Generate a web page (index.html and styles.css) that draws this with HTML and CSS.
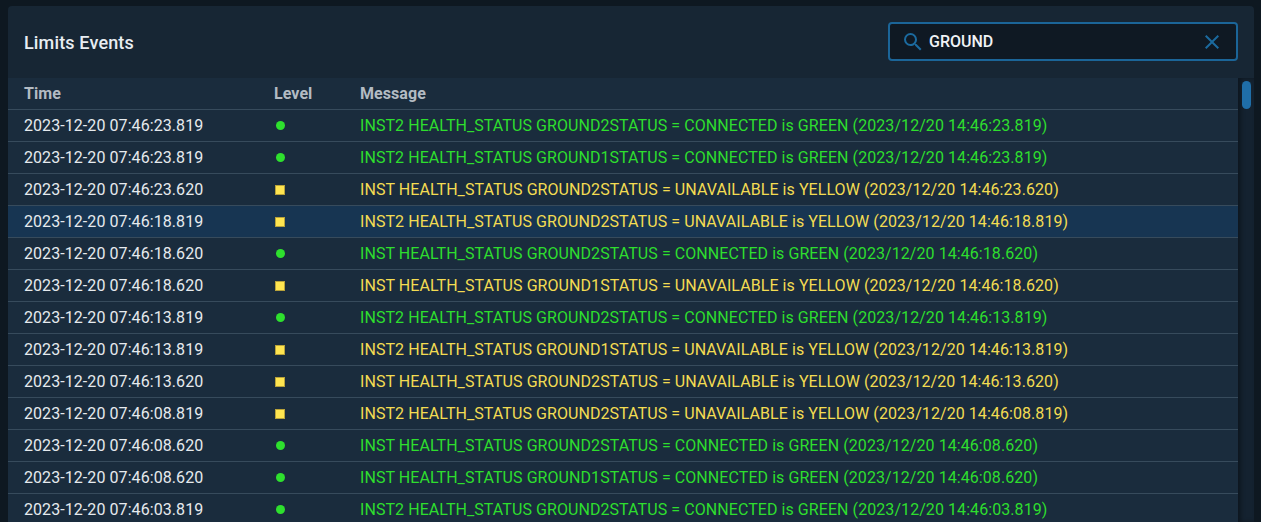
FILE: index.html
```html
<!DOCTYPE html>
<html>
<head>
<meta charset="utf-8">
<link rel="stylesheet" href="styles.css">
</head>
<body>
<div class="card">
  <div class="card-header">
    <div class="title">Limits Events</div>
    <div class="search">
      <svg class="search-icon" width="24" height="24" viewBox="0 0 24 24"><path fill="currentColor" d="M9.5,3A6.5,6.5 0 0,1 16,9.5C16,11.11 15.41,12.59 14.44,13.73L14.71,14H15.5L20.5,19L19,20.5L14,15.5V14.71L13.730,14.44C12.59,15.41 11.11,16 9.5,16A6.5,6.5 0 0,1 3,9.5A6.5,6.5 0 0,1 9.5,3M9.5,5C7,5 5,7 5,9.5C5,12 7,14 9.5,14C12,14 14,12 14,9.5C14,7 12,5 9.5,5Z"/></svg>
      <span class="search-text">GROUND</span>
      <svg class="clear-icon" width="24" height="24" viewBox="0 0 24 24"><path fill="currentColor" d="M19,6.41L17.59,5L12,10.59L6.41,5L5,6.41L10.59,12L5,17.59L6.41,19L12,13.41L17.59,19L19,17.59L13.41,12L19,6.41Z"/></svg>
    </div>
  </div>
  <div class="table-wrap">
    <div class="table">
      <div class="row head">
        <div class="c-time">Time</div>
        <div class="c-level">Level</div>
        <div class="c-msg">Message</div>
      </div>
      <div class="row"><div class="c-time">2023-12-20 07:46:23.819</div><div class="c-level"><span class="dot"></span></div><div class="c-msg green">INST2 HEALTH_STATUS GROUND2STATUS = CONNECTED is GREEN (2023/12/20 14:46:23.819)</div></div>
      <div class="row"><div class="c-time">2023-12-20 07:46:23.819</div><div class="c-level"><span class="dot"></span></div><div class="c-msg green">INST2 HEALTH_STATUS GROUND1STATUS = CONNECTED is GREEN (2023/12/20 14:46:23.819)</div></div>
      <div class="row"><div class="c-time">2023-12-20 07:46:23.620</div><div class="c-level"><span class="sq"></span></div><div class="c-msg yellow">INST HEALTH_STATUS GROUND2STATUS = UNAVAILABLE is YELLOW (2023/12/20 14:46:23.620)</div></div>
      <div class="row selected"><div class="c-time">2023-12-20 07:46:18.819</div><div class="c-level"><span class="sq"></span></div><div class="c-msg yellow">INST2 HEALTH_STATUS GROUND2STATUS = UNAVAILABLE is YELLOW (2023/12/20 14:46:18.819)</div></div>
      <div class="row"><div class="c-time">2023-12-20 07:46:18.620</div><div class="c-level"><span class="dot"></span></div><div class="c-msg green">INST HEALTH_STATUS GROUND2STATUS = CONNECTED is GREEN (2023/12/20 14:46:18.620)</div></div>
      <div class="row"><div class="c-time">2023-12-20 07:46:18.620</div><div class="c-level"><span class="sq"></span></div><div class="c-msg yellow">INST HEALTH_STATUS GROUND1STATUS = UNAVAILABLE is YELLOW (2023/12/20 14:46:18.620)</div></div>
      <div class="row"><div class="c-time">2023-12-20 07:46:13.819</div><div class="c-level"><span class="dot"></span></div><div class="c-msg green">INST2 HEALTH_STATUS GROUND2STATUS = CONNECTED is GREEN (2023/12/20 14:46:13.819)</div></div>
      <div class="row"><div class="c-time">2023-12-20 07:46:13.819</div><div class="c-level"><span class="sq"></span></div><div class="c-msg yellow">INST2 HEALTH_STATUS GROUND1STATUS = UNAVAILABLE is YELLOW (2023/12/20 14:46:13.819)</div></div>
      <div class="row"><div class="c-time">2023-12-20 07:46:13.620</div><div class="c-level"><span class="sq"></span></div><div class="c-msg yellow">INST HEALTH_STATUS GROUND2STATUS = UNAVAILABLE is YELLOW (2023/12/20 14:46:13.620)</div></div>
      <div class="row"><div class="c-time">2023-12-20 07:46:08.819</div><div class="c-level"><span class="sq"></span></div><div class="c-msg yellow">INST2 HEALTH_STATUS GROUND2STATUS = UNAVAILABLE is YELLOW (2023/12/20 14:46:08.819)</div></div>
      <div class="row"><div class="c-time">2023-12-20 07:46:08.620</div><div class="c-level"><span class="dot"></span></div><div class="c-msg green">INST HEALTH_STATUS GROUND2STATUS = CONNECTED is GREEN (2023/12/20 14:46:08.620)</div></div>
      <div class="row"><div class="c-time">2023-12-20 07:46:08.620</div><div class="c-level"><span class="dot"></span></div><div class="c-msg green">INST HEALTH_STATUS GROUND1STATUS = CONNECTED is GREEN (2023/12/20 14:46:08.620)</div></div>
      <div class="row"><div class="c-time">2023-12-20 07:46:03.819</div><div class="c-level"><span class="dot"></span></div><div class="c-msg green">INST2 HEALTH_STATUS GROUND2STATUS = CONNECTED is GREEN (2023/12/20 14:46:03.819)</div></div>
    </div>
    <div class="scrollbar"><div class="thumb"></div></div>
  </div>
</div>
</body>
</html>
```
FILE: styles.css
```css
html, body {
  margin: 0;
  padding: 0;
  height: 100%;
  overflow: hidden;
}
body {
  background: #0e1821;
  font-family: Roboto, "Liberation Sans", sans-serif;
  color: #e6eaee;
}
.card {
  margin: 6px 7px 0 8px;
  background: #172634;
  border-radius: 4px 4px 0 0;
  height: 516px;
  display: flex;
  flex-direction: column;
  overflow: hidden;
}
.card-header {
  height: 72px;
  padding: 0 16px;
  display: flex;
  align-items: center;
  justify-content: space-between;
  flex-shrink: 0;
}
.title {
  font-size: 18px;
  font-weight: 500;
  color: #e8edf2;
  letter-spacing: 0.15px;
}
.search {
  width: 350px;
  height: 39px;
  box-sizing: border-box;
  border: 2px solid #1b6598;
  border-radius: 4px;
  background: #0f1923;
  display: flex;
  align-items: center;
  padding: 0 12px 0 11px;
  margin-top: -1px;
}
.search-icon {
  color: #1b6a9e;
  flex-shrink: 0;
}
.search-text {
  margin-left: 4px;
  font-size: 16px;
  font-weight: 500;
  color: #f0f3f6;
  flex: 1;
}
.clear-icon {
  color: #1b6a9e;
  flex-shrink: 0;
}
.table-wrap {
  display: flex;
  flex: 1;
  min-height: 0;
}
.table {
  flex: 1;
  background: #1a2c3d;
  overflow: hidden;
}
.row {
  display: flex;
  align-items: center;
  height: 32px;
  box-sizing: border-box;
  border-bottom: 1px solid #374b5c;
  font-size: 16px;
  letter-spacing: 0.07px;
}
.row.head {
  font-weight: 700;
  color: #b3bbc3;
}
.row.selected {
  background: #173552;
}
.c-time {
  width: 250px;
  padding-left: 16px;
  box-sizing: border-box;
  flex-shrink: 0;
}
.c-level {
  width: 86px;
  padding-left: 16px;
  box-sizing: border-box;
  flex-shrink: 0;
  display: flex;
  align-items: center;
}
.c-msg {
  padding-left: 16px;
  white-space: nowrap;
}
.green { color: #2ede2e; }
.yellow { color: #f3dc52; }
.dot {
  width: 9px;
  height: 9px;
  border-radius: 50%;
  background: #2ee02e;
  margin-left: 2px;
}
.sq {
  width: 10px;
  height: 10px;
  box-sizing: border-box;
  background: #ffe550;
  border: 1px solid #b8a23a;
  margin-left: 1px;
}
.scrollbar {
  width: 16px;
  background: #142230;
  box-shadow: inset 3px 0 4px rgba(0,0,0,0.35);
  flex-shrink: 0;
  position: relative;
}
.thumb {
  position: absolute;
  left: 4px;
  top: 3px;
  width: 9px;
  height: 28px;
  border-radius: 5px;
  background: #1f6ea8;
}
```
